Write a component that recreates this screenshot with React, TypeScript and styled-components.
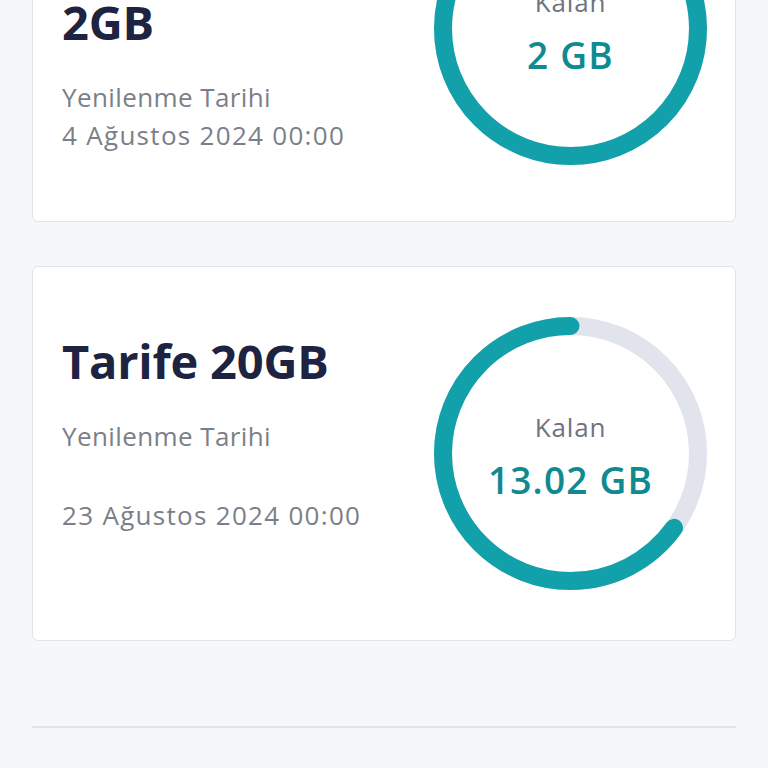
import styled, { createGlobalStyle } from "styled-components";

const GlobalStyle = createGlobalStyle`
  html, body {
    margin: 0;
    padding: 0;
    background: #f6f7f9;
    font-family: "Open Sans", "Noto Sans", "Liberation Sans", sans-serif;
    overflow: hidden;
  }
`;

const Page = styled.main`
  display: flex;
  flex-direction: column;
  gap: 44px;
  padding: 0 32px;
  /* page is scrolled: first card starts above the viewport */
  margin-top: -159px;
`;

const Card = styled.section<{ $padBottom: number }>`
  display: flex;
  justify-content: space-between;
  align-items: center;
  background: #fff;
  border: 1px solid #e1e3e8;
  border-radius: 6px;
  padding: 50px 28px ${(p) => p.$padBottom}px 29px;
`;

const Info = styled.div<{ $top: number }>`
  align-self: flex-start;
  display: flex;
  flex-direction: column;
  padding-top: ${(p) => p.$top}px;
`;

const Title = styled.h2`
  margin: 0 0 30px;
  font-size: 47px;
  font-weight: 700;
  line-height: 54px;
  letter-spacing: -0.2px;
  color: #1e2341;
`;

const Meta = styled.p<{ $gap?: number; $spacing: number }>`
  margin: ${(p) => p.$gap ?? 0}px 0 0;
  font-size: 26px;
  line-height: 36px;
  letter-spacing: ${(p) => p.$spacing}px;
  color: #7b7f88;
`;

const Ring = styled.div`
  position: relative;
  width: 273px;
  height: 273px;
  flex-shrink: 0;

  svg {
    display: block;
  }
`;

const RingLabel = styled.div`
  position: absolute;
  inset: 0;
  padding-top: 5px;
  display: flex;
  flex-direction: column;
  align-items: center;
  justify-content: center;
  gap: 17px;
`;

const RingCaption = styled.span`
  font-size: 26px;
  line-height: 30px;
  letter-spacing: 0.8px;
  color: #6f7380;
`;

const RingValue = styled.strong`
  font-size: 37px;
  line-height: 42px;
  font-weight: 600;
  letter-spacing: 1.2px;
  color: #0f8a90;
`;

const SIZE = 273;
const STROKE = 18;
const R = (SIZE - STROKE) / 2;
const C = 2 * Math.PI * R;

function Usage({ left, total }: { left: number; total: number }) {
  const p = Math.min(1, left / total);
  const full = p >= 1;
  return (
    <Ring>
      <svg width={SIZE} height={SIZE} viewBox={`0 0 ${SIZE} ${SIZE}`}>
        <g transform={`rotate(-90 ${SIZE / 2} ${SIZE / 2})`}>
          <circle cx={SIZE / 2} cy={SIZE / 2} r={R} fill="none" stroke="#e1e4ed" strokeWidth={STROKE} />
          <circle
            cx={SIZE / 2}
            cy={SIZE / 2}
            r={R}
            fill="none"
            stroke="#12a0aa"
            strokeWidth={STROKE}
            strokeLinecap={full ? "butt" : "round"}
            strokeDasharray={full ? undefined : `${p * C} ${C}`}
            strokeDashoffset={full ? undefined : -(1 - p) * C}
          />
        </g>
      </svg>
      <RingLabel>
        <RingCaption>Kalan</RingCaption>
        <RingValue>{left % 1 === 0 ? left : left.toFixed(2)} GB</RingValue>
      </RingLabel>
    </Ring>
  );
}

const Divider = styled.hr`
  margin: 41px 0 0;
  border: none;
  height: 2px;
  background: #e2e4e9;
`;

export default function App() {
  return (
    <>
      <GlobalStyle />
      <Page>
        <Card $padBottom={56}>
          <Info $top={103}>
            <Title>2GB</Title>
            <Meta $spacing={0.4}>Yenilenme Tarihi</Meta>
            <Meta $spacing={1.3} $gap={2}>4 Ağustos 2024 00:00</Meta>
          </Info>
          <Usage left={2} total={2} />
        </Card>
        <Card $padBottom={50}>
          <Info $top={17}>
            <Title>Tarife 20GB</Title>
            <Meta $spacing={0.4}>Yenilenme Tarihi</Meta>
            <Meta $spacing={1.3} $gap={43}>23 Ağustos 2024 00:00</Meta>
          </Info>
          <Usage left={13.02} total={20} />
        </Card>
        <Divider />
      </Page>
    </>
  );
}
